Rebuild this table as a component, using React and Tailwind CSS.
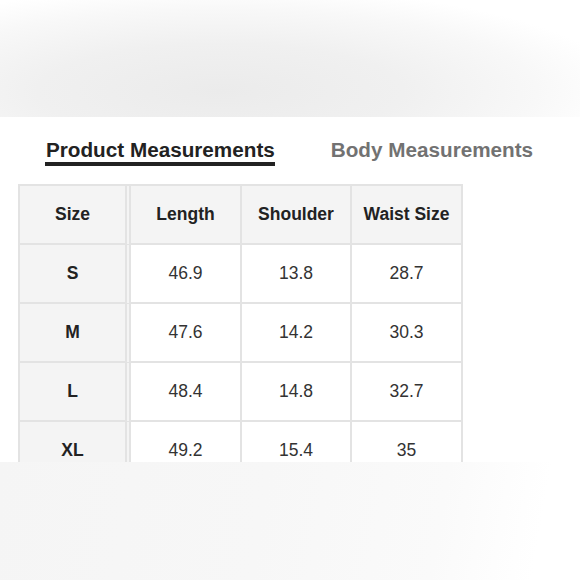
const sizes = [
  { size: 'S', length: '46.9', shoulder: '13.8', waist: '28.7' },
  { size: 'M', length: '47.6', shoulder: '14.2', waist: '30.3' },
  { size: 'L', length: '48.4', shoulder: '14.8', waist: '32.7' },
  { size: 'XL', length: '49.2', shoulder: '15.4', waist: '35' },
];

function Row({ cells, header }) {
  const base = 'h-[59px] flex items-center justify-center border-b-2 border-[#e3e3e3] text-[17.5px]';
  const rowBg = header ? 'bg-[#f4f4f4]' : 'bg-white';
  const weight = header ? 'font-bold text-[#222]' : 'text-[#333]';
  return (
    <div className="flex">
      {/* first column carries a double rule on its right side */}
      <div className={`${base} w-[111px] bg-[#f4f4f4] font-bold text-[#222] border-r-[6px] [border-right-style:double]`}>
        {cells[0]}
      </div>
      <div className={`${base} ${rowBg} ${weight} w-[111px] border-r-2`}>{cells[1]}</div>
      <div className={`${base} ${rowBg} ${weight} w-[110px] border-r-2`}>{cells[2]}</div>
      <div className={`${base} ${rowBg} ${weight} w-[111px] border-r-2`}>{cells[3]}</div>
    </div>
  );
}

export default function App() {
  return (
    <div className="w-[580px] h-[580px] overflow-hidden bg-white font-['Liberation_Sans',Arial,sans-serif]">
      {/* blurred band on top */}
      <div className="h-[117px] bg-[radial-gradient(ellipse_70%_90%_at_38%_78%,#ebebeb_0%,#f0f0f0_45%,#f8f8f8_78%,#ffffff_100%)]" />

      {/* tabs */}
      <div className="flex items-start pt-[22px]">
        <div className="ml-[45px] pl-[1px] pb-[2px] border-b-4 border-[#222] text-[20.7px] leading-[21px] font-bold text-[#222]">
          Product Measurements
        </div>
        <div className="ml-[56px] text-[20.7px] leading-[21px] font-bold text-[#727272]">
          Body Measurements
        </div>
      </div>

      {/* size table, cut off by the lower band */}
      <div className="mt-[18px] h-[278px] overflow-hidden">
        <div className="ml-[18px] w-[445px] border-t-2 border-l-2 border-[#e3e3e3]">
          <Row header cells={['Size', 'Length', 'Shoulder', 'Waist Size']} />
          {sizes.map((s) => (
            <Row key={s.size} cells={[s.size, s.length, s.shoulder, s.waist]} />
          ))}
        </div>
      </div>

      {/* blurred band at the bottom */}
      <div className="h-[118px] bg-[linear-gradient(100deg,#f5f5f5_0%,#f7f7f7_45%,#fafafa_75%,#ffffff_92%)]" />
    </div>
  );
}
